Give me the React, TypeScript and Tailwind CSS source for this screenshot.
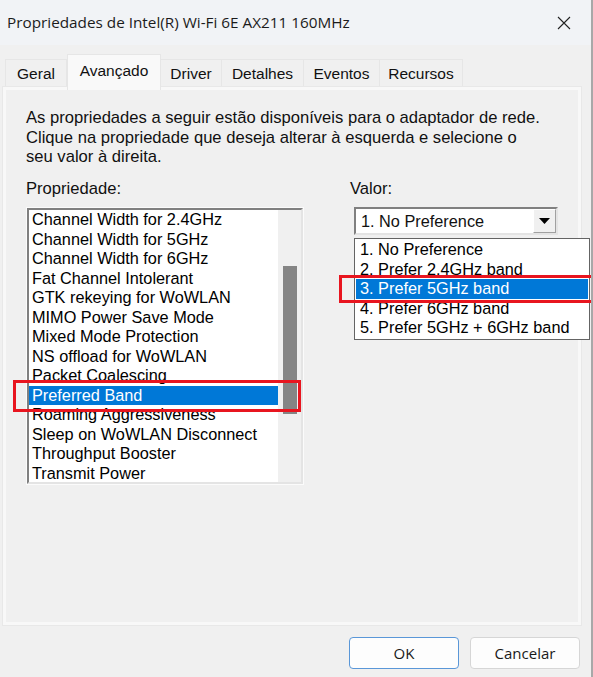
import React from "react";

const props = [
  "Channel Width for 2.4GHz",
  "Channel Width for 5GHz",
  "Channel Width for 6GHz",
  "Fat Channel Intolerant",
  "GTK rekeying for WoWLAN",
  "MIMO Power Save Mode",
  "Mixed Mode Protection",
  "NS offload for WoWLAN",
  "Packet Coalescing",
  "Preferred Band",
  "Roaming Aggressiveness",
  "Sleep on WoWLAN Disconnect",
  "Throughput Booster",
  "Transmit Power",
];

const values = [
  "1. No Preference",
  "2. Prefer 2.4GHz band",
  "3. Prefer 5GHz band",
  "4. Prefer 6GHz band",
  "5. Prefer 5GHz + 6GHz band",
];

const sans = "font-['Liberation_Sans',Arial,sans-serif]";
const ui = "font-['Open_Sans','Noto_Sans',sans-serif]";

function Tabs() {
  return (
    <div className={`flex h-[33px] items-end pl-[5px] text-[15.5px] text-[#111] ${sans}`}>
      <div className="flex h-[28px] w-[62px] items-center justify-center border border-b-0 border-[#e6e6e6]">
        Geral
      </div>
      <div className="relative z-10 -mb-[3px] flex h-[36px] w-[94px] items-start justify-center border border-b-0 border-[#e6e6e6] bg-[#f9f9f9] pt-[4px]">
        Avançado
      </div>
      <div className="flex h-[28px] w-[61px] items-center justify-center border border-b-0 border-l-0 border-[#e6e6e6]">
        Driver
      </div>
      <div className="flex h-[28px] w-[82px] items-center justify-center border border-b-0 border-l-0 border-[#e6e6e6]">
        Detalhes
      </div>
      <div className="flex h-[28px] w-[76px] items-center justify-center border border-b-0 border-l-0 border-[#e6e6e6]">
        Eventos
      </div>
      <div className="flex h-[28px] w-[83px] items-center justify-center border border-b-0 border-l-0 border-[#e6e6e6]">
        Recursos
      </div>
    </div>
  );
}

function PropertyList() {
  return (
    <div className="w-[278px] border border-[#fbfbfb]">
      <div className="flex h-[276px] border-2 border-t-[#808080] border-l-[#808080] border-r-[#e4e4e4] border-b-[#e4e4e4] bg-white">
        <ul className="flex-1 text-[16.3px] leading-[19.5px] text-black">
          {props.map((p) =>
            p === "Preferred Band" ? (
              <li key={p} className="bg-[#0078d7] pl-[3px] text-white">
                {p}
              </li>
            ) : (
              <li key={p} className="pl-[3px]">
                {p}
              </li>
            )
          )}
        </ul>
        <div className="w-[23px] bg-[#f0f0f0] pl-[5px] pt-[56px]">
          <div className="h-[148px] w-[14px] bg-[#858585]" />
        </div>
      </div>
    </div>
  );
}

function ValueCombo() {
  return (
    <div className="flex h-[28px] w-[204px] border-2 border-t-[#808080] border-l-[#808080] border-r-[#e4e4e4] border-b-[#e4e4e4] bg-white">
      <div className="flex-1 pl-[5px] text-[16.3px] leading-[25px]">1. No Preference</div>
      <div className="flex w-[23px] items-center justify-center border border-t-[#fff] border-l-[#fff] border-r-[#a0a0a0] border-b-[#a0a0a0] bg-[#f0f0f0]">
        <svg width="11" height="6" viewBox="0 0 11 6">
          <path d="M0 0h11L5.5 6z" fill="#000" />
        </svg>
      </div>
    </div>
  );
}

export default function App() {
  return (
    <div className={`relative flex h-[677px] w-[593px] flex-col overflow-hidden border-r-2 border-[#a8a8a8] bg-[#f0f0f0] ${sans}`}>
      <div className="flex h-[45px] shrink-0 items-center justify-between bg-[#f1f3f6] pl-[7px] pr-[20px]">
        <span className={`text-[15.3px] text-[#1b1b1b] ${ui}`}>
          Propriedades de Intel(R) Wi-Fi 6E AX211 160MHz
        </span>
        <svg width="14" height="14" viewBox="0 0 14 14">
          <path d="M1 1l12 12M13 1L1 13" stroke="#222" strokeWidth="1.1" />
        </svg>
      </div>

      <div className="mt-[9px]">
        <Tabs />
      </div>

      <div className="relative ml-[3px] h-[538px] w-[578px] border-[3px] border-[#f8f8f8] outline outline-1 outline-[#e8e8e8]">
        <div className="px-[20px] pt-[18px] text-[16.6px] leading-[19.5px] text-[#111]">
          <p>
            As propriedades a seguir estão disponíveis para o adaptador de rede.
            <br />
            Clique na propriedade que deseja alterar à esquerda e selecione o
            <br />
            seu valor à direita.
          </p>

          <div className="mt-[12px] flex">
            <div className="w-[324px]">
              <div className="mb-[9px]">Propriedade:</div>
              <PropertyList />
            </div>
            <div>
              <div className="mb-[9px]">Valor:</div>
              <div className="pl-[4px]">
                <ValueCombo />
              </div>
            </div>
          </div>
        </div>

        <ul className="absolute left-[348px] top-[148px] w-[236px] border border-[#646464] bg-white p-px text-[16.3px] leading-[19.5px] text-black">
          {values.map((v) =>
            v.startsWith("3.") ? (
              <li key={v} className="bg-[#0078d7] pl-[4px] text-white">
                {v}
              </li>
            ) : (
              <li key={v} className="pl-[4px]">
                {v}
              </li>
            )
          )}
        </ul>

        <div className="pointer-events-none absolute left-[7px] top-[290px] h-[32px] w-[288px] border-[3px] border-[#e8151f]" />
        <div className="pointer-events-none absolute left-[333px] top-[185px] h-[28px] w-[270px] border-[3px] border-[#e8151f]" />
      </div>

      <div className={`mt-[12px] flex justify-end gap-[11px] pr-[11px] text-[15px] text-[#1a1a1a] ${ui}`}>
        <button className="h-[32px] w-[110px] rounded-[4px] border border-[#5a97d8] bg-[#fdfdfd]">OK</button>
        <button className="h-[32px] w-[110px] rounded-[4px] border border-[#d6d6d6] bg-[#fdfdfd]">Cancelar</button>
      </div>
    </div>
  );
}
